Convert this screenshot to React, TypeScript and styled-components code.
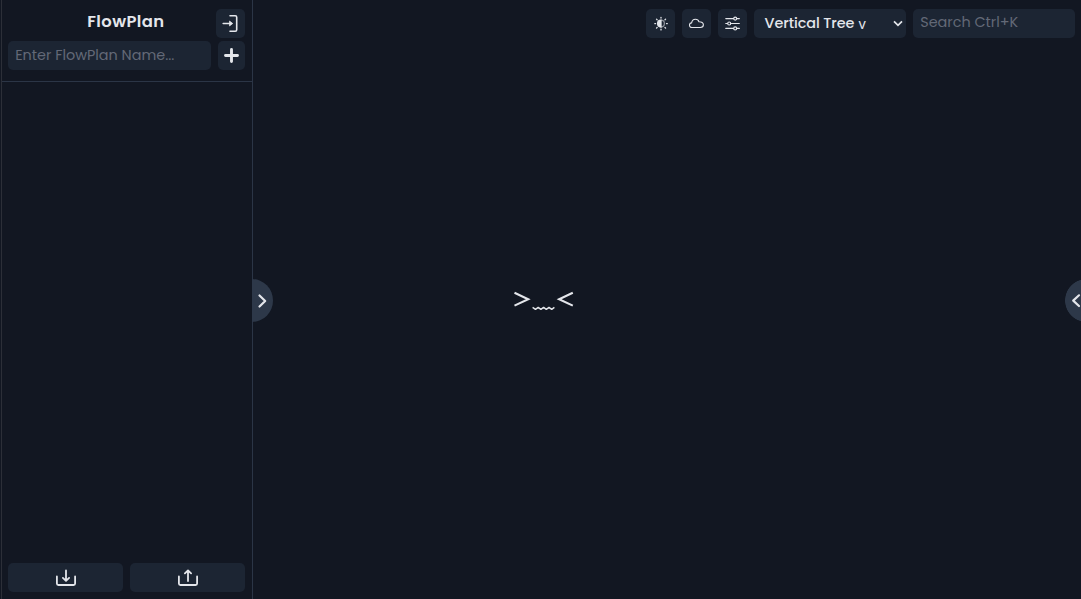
import React from "react";
import styled, { createGlobalStyle } from "styled-components";

const color = {
  page: "#121722",
  control: "#1c2533",
  line: "#2b3546",
  handle: "#2d3849",
  text: "#e4e6eb",
  muted: "#636977",
};

const GlobalStyle = createGlobalStyle`
  * { box-sizing: border-box; }
  body {
    margin: 0;
    overflow: hidden;
    background: ${color.page};
    color: ${color.text};
    font-family: Poppins, Inter, sans-serif;
  }
`;

const Layout = styled.div`
  position: relative;
  display: flex;
  height: 100vh;
  overflow: hidden;
`;

const Sidebar = styled.aside`
  display: flex;
  flex-direction: column;
  flex: none;
  width: 252px;
  margin-left: 1px;
  border-left: 1px solid #2c2f38;
  border-right: 1px solid ${color.line};
`;

const SidebarHeader = styled.header`
  height: 82px;
  padding: 9px 7px 0 6px;
  border-bottom: 1px solid ${color.line};
`;

const TitleRow = styled.div`
  display: grid;
  grid-template-columns: 29px 1fr 29px;
  height: 32px;
`;

const Title = styled.h1`
  grid-column: 2;
  margin: 0;
  padding-left: 50.2px;
  font-size: 16.4px;
  line-height: 25px;
  font-weight: 600;
  letter-spacing: 0.43px;
  white-space: nowrap;
`;

const Button = styled.button<{ $width?: number }>`
  display: flex;
  align-items: center;
  justify-content: center;
  flex: ${(p) => (p.$width ? "none" : "1")};
  width: ${(p) => (p.$width ? `${p.$width}px` : "auto")};
  height: 29px;
  padding: 0;
  border: 0;
  border-radius: 5px;
  background: ${color.control};
  color: ${color.text};
`;

const Row = styled.div`
  display: flex;
  gap: 7px;
`;

const Field = styled.input<{ $width: number; $lift?: number }>`
  width: ${(p) => p.$width}px;
  height: 29px;
  padding: 0 7px ${(p) => p.$lift ?? 0}px 7.2px;
  border: 0;
  border-radius: 5px;
  outline: 0;
  background: ${color.control};
  color: ${color.text};
  font: 400 14.4px Poppins, Inter, sans-serif;
  &::placeholder { color: ${color.muted}; opacity: 1; }
`;

const SidebarFooter = styled.footer`
  display: flex;
  gap: 7px;
  margin-top: auto;
  padding: 0 7px 7px 6px;
`;

const Main = styled.main`
  display: flex;
  flex: 1;
  flex-direction: column;
`;

const Toolbar = styled.div`
  display: flex;
  justify-content: flex-end;
  gap: 7px;
  padding: 9px 6px 0 0;
`;

const Picker = styled.button`
  display: flex;
  align-items: center;
  width: 152px;
  height: 29px;
  padding: 0 3px 0 10.5px;
  border: 0;
  border-radius: 5px;
  background: ${color.control};
  color: ${color.text};
  font: 500 14.4px Poppins, Inter, sans-serif;
  letter-spacing: -0.08px;
  white-space: nowrap;
  svg { margin-left: auto; }
`;

const SmallV = styled.span`
  margin: 0 0 0 4px;
  font-family: Inter, sans-serif;
  font-size: 14px;
  font-weight: 400;
`;

const Canvas = styled.div`
  display: flex;
  flex: 1;
  align-items: center;
  justify-content: center;
  padding: 0 247px 36px 0;
`;

const Handle = styled.button<{ $side: "left" | "right" }>`
  position: absolute;
  top: 279px;
  ${(p) => (p.$side === "left" ? "left: 252px;" : "right: 0;")}
  display: flex;
  align-items: center;
  width: ${(p) => (p.$side === "left" ? 21 : 16)}px;
  height: 43px;
  padding: 0 0 0 ${(p) => (p.$side === "left" ? 5 : 6)}px;
  overflow: hidden;
  border: 0;
  border-radius: ${(p) => (p.$side === "left" ? "0 21px 21px 0 / 0 21.5px 21.5px 0" : "0")};
  background: ${(p) => (p.$side === "left" ? color.handle : `radial-gradient(circle at 21.5px 21.5px, ${color.handle} 21px, transparent 21.7px)`)};
  color: ${color.text};
  svg { flex: none; }
`;

const LoginIcon = () => (
  <svg width="17" height="18" viewBox="0 0 17 18" fill="none" stroke="currentColor" strokeWidth="1.6" strokeLinecap="round" strokeLinejoin="round">
    <path d="M8 .8h5.3q1.4 0 1.4 1.4v12.6q0 1.4-1.4 1.4H8" />
    <path d="M1.2 8.5H8.5" />
    <path d="m7.8 6.3 2.9 2.2-2.9 2.2z" fill="currentColor" strokeWidth=".8" />
  </svg>
);

const PlusIcon = () => (
  <svg width="17" height="17" viewBox="0 0 17 17" stroke="currentColor" strokeWidth="2.9" strokeLinecap="round">
    <path d="M8.5 2.5v12M2.5 8.5h12" />
  </svg>
);

const ContrastIcon = () => (
  <svg width="15" height="15" viewBox="0 0 15 15" fill="none" stroke="currentColor" strokeWidth="1.3" strokeLinecap="round">
    <path d="M8 4.2a3.4 3.4 0 0 0 0 6.8z" fill="currentColor" />
    <path d="M8 4.2a3.4 3.4 0 0 1 0 6.8" opacity=".55" />
    <path d="M8 1.3v.8M8 13.1v.8M1.8 7.6h.8M13.5 7.6h.8M3.5 3.1l.6.6M12 11.5l.6.6M3.5 12.1l.6-.6M12 3.7l.6-.6" />
  </svg>
);

const CloudIcon = () => (
  <svg width="16" height="11" viewBox="0 0 16 11" fill="none" stroke="currentColor" strokeWidth="1.1" strokeLinejoin="round">
    <path d="M3 9.5a2.3 2.3 0 0 1-.4-4.6C3 2.8 4.3 1.3 6.4 1.3c1.8 0 3.1.9 3.6 2.5 2.5-.1 4.4 1.1 4.4 3 0 1.7-1.3 2.7-3.1 2.7z" />
  </svg>
);

const SlidersIcon = () => (
  <svg width="16" height="15" viewBox="0 0 16 15" fill="none" stroke="currentColor" strokeWidth="1.2" strokeLinecap="round">
    <path d="M.8 2.6h7.6M12 2.6h2.3M.8 7.5h1.6M6 7.5h8.3M.8 12.4h7.6M12 12.4h2.3" />
    <circle cx="10.2" cy="2.6" r="1.5" />
    <circle cx="4.2" cy="7.5" r="1.5" />
    <circle cx="10.2" cy="12.4" r="1.5" />
  </svg>
);

const TrayIcon = ({ up = false }: { up?: boolean }) => (
  <svg width="22" height="18" viewBox="0 0 22 18" fill="none" stroke="currentColor" strokeWidth="1.8" strokeLinecap="round" strokeLinejoin="round">
    <path d="M1.9 7.5v7Q1.9 16 3.4 16h15.2q1.5 0 1.5-1.5v-7" />
    {up ? <path d="M11 12V1.6M7.9 4.4 11 1.4l3.1 3" /> : <path d="M11 1.4v10.3M7.9 8.9l3.1 3 3.1-3" />}
  </svg>
);

const Chevron = ({ left = false }: { left?: boolean }) => (
  <svg width="10" height="16" viewBox="0 0 10 16" fill="none" stroke="currentColor" strokeWidth="2.2" strokeLinecap="round" strokeLinejoin="round">
    <path d={left ? "M8 2.3 2.2 7.6 8 13" : "M2.5 2.5 8.2 8l-5.7 5.5"} />
  </svg>
);

const CaretIcon = () => (
  <svg width="10" height="7" viewBox="0 0 10 7" fill="none" stroke="currentColor" strokeWidth="1.7">
    <path d="m1 1.3 4 4 4-4" />
  </svg>
);

const FaceIcon = () => (
  <svg width="60" height="22" viewBox="0 0 60 22" fill="none" stroke="currentColor">
    <path d="M.5 2.8 14.2 9.2.5 15.6M58.8 2.8 45.1 9.2l13.7 6.4" strokeWidth="2.1" />
    <path d="M18.6 17.4l2.9 2 2.7-2 2.7 2 2.7-2 2.7 2 2.7-2 2.7 2 2.7-2" strokeWidth="1.4" strokeLinejoin="round" />
  </svg>
);

export default function App() {
  return (
    <>
      <GlobalStyle />
      <Layout>
        <Sidebar>
          <SidebarHeader>
            <TitleRow>
              <Title>FlowPlan</Title>
              <Button $width={29} aria-label="Sign in"><LoginIcon /></Button>
            </TitleRow>
            <Row>
              <Field $width={203} placeholder="Enter FlowPlan Name..." />
              <Button $width={27} aria-label="Add"><PlusIcon /></Button>
            </Row>
          </SidebarHeader>
          <SidebarFooter>
            <Button aria-label="Import"><TrayIcon /></Button>
            <Button aria-label="Export"><TrayIcon up /></Button>
          </SidebarFooter>
        </Sidebar>
        <Main>
          <Toolbar>
            <Button $width={29} aria-label="Theme"><ContrastIcon /></Button>
            <Button $width={29} aria-label="Cloud"><CloudIcon /></Button>
            <Button $width={29} aria-label="Settings"><SlidersIcon /></Button>
            <Picker>Vertical Tree<SmallV>v</SmallV><CaretIcon /></Picker>
            <Field $width={162} $lift={2} placeholder="Search Ctrl+K" />
          </Toolbar>
          <Canvas>
            <FaceIcon />
          </Canvas>
        </Main>
        <Handle $side="left" aria-label="Toggle sidebar"><Chevron /></Handle>
        <Handle $side="right" aria-label="Open panel"><Chevron left /></Handle>
      </Layout>
    </>
  );
}
